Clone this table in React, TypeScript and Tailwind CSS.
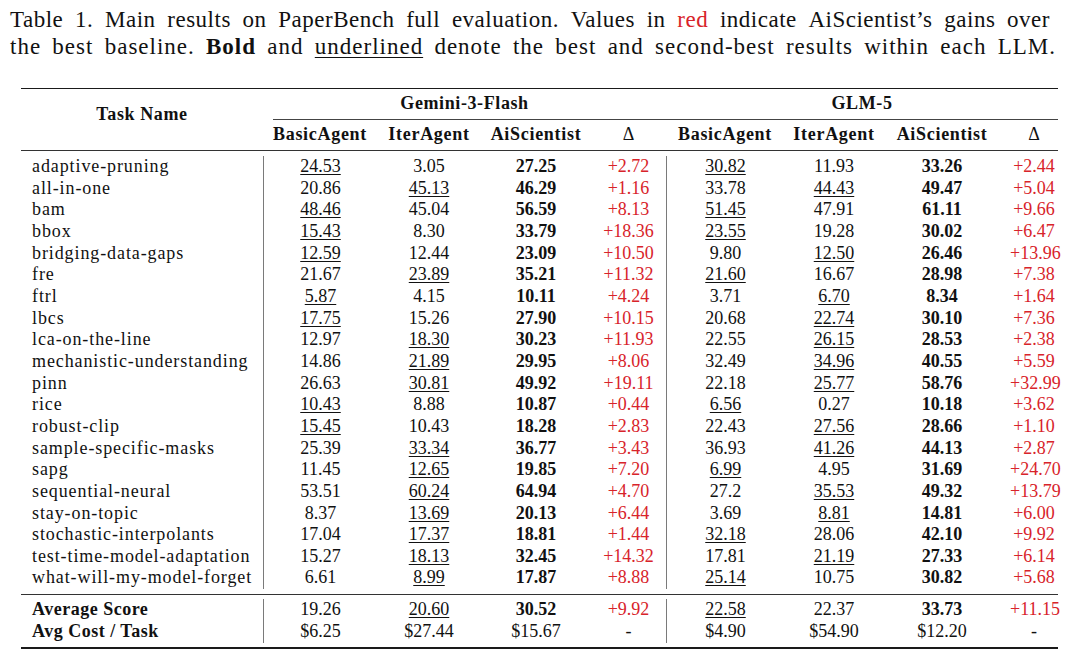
import React from "react";

// column layout: task name, then 4 Gemini columns, then 4 GLM columns
const COLS = [
  "w-[114px]",
  "w-[104px]",
  "w-[110px]",
  "w-[75px]",
  "w-[118px]",
  "w-[100px]",
  "w-[116px]",
  "w-[58px] pl-[10px]",
];

const RED = "text-[#d8232a]";

// "_" prefix = second best (underlined)
const ROWS: [string, string[]][] = [
  ["adaptive-pruning", ["_24.53", "3.05", "27.25", "+2.72", "_30.82", "11.93", "33.26", "+2.44"]],
  ["all-in-one", ["20.86", "_45.13", "46.29", "+1.16", "33.78", "_44.43", "49.47", "+5.04"]],
  ["bam", ["_48.46", "45.04", "56.59", "+8.13", "_51.45", "47.91", "61.11", "+9.66"]],
  ["bbox", ["_15.43", "8.30", "33.79", "+18.36", "_23.55", "19.28", "30.02", "+6.47"]],
  ["bridging-data-gaps", ["_12.59", "12.44", "23.09", "+10.50", "9.80", "_12.50", "26.46", "+13.96"]],
  ["fre", ["21.67", "_23.89", "35.21", "+11.32", "_21.60", "16.67", "28.98", "+7.38"]],
  ["ftrl", ["_5.87", "4.15", "10.11", "+4.24", "3.71", "_6.70", "8.34", "+1.64"]],
  ["lbcs", ["_17.75", "15.26", "27.90", "+10.15", "20.68", "_22.74", "30.10", "+7.36"]],
  ["lca-on-the-line", ["12.97", "_18.30", "30.23", "+11.93", "22.55", "_26.15", "28.53", "+2.38"]],
  ["mechanistic-understanding", ["14.86", "_21.89", "29.95", "+8.06", "32.49", "_34.96", "40.55", "+5.59"]],
  ["pinn", ["26.63", "_30.81", "49.92", "+19.11", "22.18", "_25.77", "58.76", "+32.99"]],
  ["rice", ["_10.43", "8.88", "10.87", "+0.44", "_6.56", "0.27", "10.18", "+3.62"]],
  ["robust-clip", ["_15.45", "10.43", "18.28", "+2.83", "22.43", "_27.56", "28.66", "+1.10"]],
  ["sample-specific-masks", ["25.39", "_33.34", "36.77", "+3.43", "36.93", "_41.26", "44.13", "+2.87"]],
  ["sapg", ["11.45", "_12.65", "19.85", "+7.20", "_6.99", "4.95", "31.69", "+24.70"]],
  ["sequential-neural", ["53.51", "_60.24", "64.94", "+4.70", "27.2", "_35.53", "49.32", "+13.79"]],
  ["stay-on-topic", ["8.37", "_13.69", "20.13", "+6.44", "3.69", "_8.81", "14.81", "+6.00"]],
  ["stochastic-interpolants", ["17.04", "_17.37", "18.81", "+1.44", "_32.18", "28.06", "42.10", "+9.92"]],
  ["test-time-model-adaptation", ["15.27", "_18.13", "32.45", "+14.32", "17.81", "_21.19", "27.33", "+6.14"]],
  ["what-will-my-model-forget", ["6.61", "_8.99", "17.87", "+8.88", "_25.14", "10.75", "30.82", "+5.68"]],
];

function Cell({ value, col, plain }: { value: string; col: number; plain?: boolean }) {
  const under = value.startsWith("_");
  const text = under ? value.slice(1) : value;
  const bold = !plain && (col === 2 || col === 6);
  const red = !plain && (col === 3 || col === 7);
  const edge = col === 0 || col === 4 ? "border-l border-[#7a7a7a]" : "";
  return (
    <div className={`${COLS[col]} ${edge} text-center`}>
      <span
        className={`${bold ? "font-bold" : ""} ${red ? RED : ""} ${
          under ? "underline decoration-1 underline-offset-[2px]" : ""
        }`}
      >
        {text}
      </span>
    </div>
  );
}

function Row({ name, values, strong, plain, h }: { name: string; values: string[]; strong?: boolean; plain?: boolean; h: string }) {
  return (
    <div className={`flex ${h} items-center`}>
      <div className={`w-[242px] pl-[11px] ${strong ? "font-bold tracking-[0.5px]" : "tracking-[0.9px]"}`}>{name}</div>
      {values.map((v, i) => (
        <Cell key={i} value={v} col={i} plain={plain} />
      ))}
    </div>
  );
}

const HEAD = ["BasicAgent", "IterAgent", "AiScientist", "Δ", "BasicAgent", "IterAgent", "AiScientist", "Δ"];

// caption lines, words spread edge to edge like the justified LaTeX caption
const LINE1: React.ReactNode[] = [
  "Table", "1.", "Main", "results", "on", "PaperBench", "full", "evaluation.", "Values", "in",
  <span className={RED}>red</span>, "indicate", "AiScientist’s", "gains", "over",
];
const LINE2: React.ReactNode[] = [
  "the", "best", "baseline.", <b>Bold</b>, "and",
  <span className="underline decoration-1 underline-offset-[3px]">underlined</span>,
  "denote", "the", "best", "and", "second-best", "results", "within", "each", "LLM.",
];

export default function App() {
  return (
    <div className="w-[1080px] h-[671px] overflow-hidden bg-white text-[#111] font-['Liberation_Serif','Times_New_Roman',serif]">
      <div className="pl-[10px] pt-[6px] text-[23px] leading-[27px]">
        <p className="flex w-[1040px] justify-between tracking-[0.5px]">
          {LINE1.map((w, i) => (
            <span key={i}>{w}</span>
          ))}
        </p>
        <p className="flex w-[1046px] justify-between tracking-[1px]">
          {LINE2.map((w, i) => (
            <span key={i}>{w}</span>
          ))}
        </p>
      </div>

      <div className="ml-[21px] mt-[27.5px] w-[1037px] text-[18px] leading-[21.67px]">
        <div className="h-[1.5px] bg-[#1a1a1a]" />

        {/* header */}
        <div className="flex">
          <div className="w-[242px] flex items-center justify-center pb-[10px] font-bold tracking-[0.6px]">
            Task Name
          </div>
          <div className="w-[795px]">
            <div className="flex h-[30px] items-center font-bold tracking-[0.6px]">
              <div className="w-[403px] text-center">Gemini-3-Flash</div>
              <div className="w-[392px] text-center">GLM-5</div>
            </div>
            <div className="ml-[10px] h-px bg-[#444]" />
            <div className="flex h-[30px] items-center">
              {HEAD.map((t, i) => (
                <div key={i} className={`${COLS[i]} text-center ${t === "Δ" ? "" : "font-bold tracking-[0.7px]"}`}>
                  {t}
                </div>
              ))}
            </div>
          </div>
        </div>
        <div className="h-px bg-[#333]" />

        {/* per-task rows */}
        <div className="pt-[5px] pb-[5px]">
          {ROWS.map(([name, vals]) => (
            <Row key={name} name={name} values={vals} h="h-[21.67px]" />
          ))}
        </div>
        <div className="h-px bg-[#333]" />

        {/* summary rows */}
        <div className="pt-[4px] pb-[4px]">
          <Row
            name="Average Score"
            strong
            values={["19.26", "_20.60", "30.52", "+9.92", "_22.58", "22.37", "33.73", "+11.15"]}
            h="h-[22px]"
          />
          <Row
            name="Avg Cost / Task"
            strong
            plain
            values={["$6.25", "$27.44", "$15.67", "-", "$4.90", "$54.90", "$12.20", "-"]}
            h="h-[22px]"
          />
        </div>
        <div className="h-[1.5px] bg-[#1a1a1a]" />
      </div>
    </div>
  );
}
